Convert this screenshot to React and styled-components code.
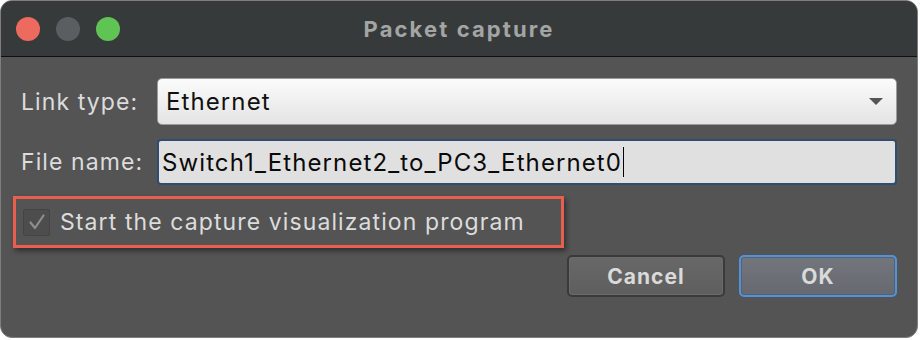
import React from "react";
import styled, { createGlobalStyle } from "styled-components";

const Global = createGlobalStyle`
  html, body { margin: 0; padding: 0; background: #ffffff; }
  body { font-family: Inter, "Noto Sans", sans-serif; }
`;

const Window = styled.div`
  box-sizing: border-box;
  width: 918px;
  height: 338px;
  border: 1px solid #7e7e7e;
  border-radius: 12px;
  overflow: hidden;
  background: #545454;
  display: flex;
  flex-direction: column;
`;

const TitleBar = styled.div`
  position: relative;
  height: 55px;
  flex: none;
  background: #363a3a;
  border-bottom: 1px solid #101010;
  display: flex;
  align-items: center;
  padding-left: 15px;
  gap: 16px;
`;

const Light = styled.span`
  width: 24px;
  height: 24px;
  border-radius: 50%;
  background: ${(p) => p.$color};
`;

const Title = styled.div`
  position: absolute;
  left: 0;
  right: 0;
  top: 0;
  bottom: 0;
  display: flex;
  align-items: center;
  justify-content: center;
  font-weight: 700;
  font-size: 22px;
  letter-spacing: 2.1px;
  color: #a3a5a5;
  pointer-events: none;
`;

const Content = styled.div`
  flex: 1;
  padding: 21px 20px 0 12px;
  display: flex;
  flex-direction: column;
`;

const Form = styled.div`
  display: grid;
  grid-template-columns: 136px 1fr;
  row-gap: 14px;
  align-items: center;
  padding-left: 8px;
`;

const Label = styled.div`
  font-size: 23px;
  letter-spacing: 1.1px;
  color: #dcdcdc;
`;

const Combo = styled.div`
  box-sizing: border-box;
  height: 47px;
  border: 1px solid #9c9c9c;
  border-radius: 5px;
  background: linear-gradient(#fbfbfb, #e4e4e4);
  display: flex;
  align-items: center;
  justify-content: space-between;
  padding: 0 13px 0 8px;
  font-size: 24px;
  letter-spacing: 1.1px;
  color: #111;
`;

const Arrow = styled.span`
  width: 0;
  height: 0;
  border-left: 7px solid transparent;
  border-right: 7px solid transparent;
  border-top: 7px solid #555;
`;

const Input = styled.div`
  box-sizing: border-box;
  height: 46px;
  border: 2px solid #2e4d70;
  border-radius: 4px;
  background: #e0e0e0;
  display: flex;
  align-items: center;
  padding-left: 3px;
  font-size: 24px;
  letter-spacing: 1.1px;
  color: #0a0a0a;
`;

const Caret = styled.span`
  display: inline-block;
  width: 1px;
  height: 30px;
  background: #000;
  margin-left: 1px;
`;

const Highlight = styled.div`
  box-sizing: border-box;
  margin-top: 11px;
  width: 551px;
  height: 52px;
  border: 3px solid #e6604d;
  box-shadow: 2px 3px 5px rgba(0, 0, 0, 0.45);
  display: flex;
  align-items: center;
  padding-left: 7px;
  gap: 10px;
`;

const Check = styled.span`
  box-sizing: border-box;
  width: 27px;
  height: 27px;
  border: 1px solid #444;
  background: #4d4d4d;
  border-radius: 2px;
  display: flex;
  align-items: center;
  justify-content: center;
`;

const CheckLabel = styled.span`
  font-size: 23px;
  letter-spacing: 1.1px;
  color: #dcdcdc;
`;

const Buttons = styled.div`
  display: flex;
  justify-content: flex-end;
  gap: 14px;
  margin-top: 7px;
`;

const Button = styled.div`
  box-sizing: border-box;
  width: 158px;
  height: 42px;
  border-radius: 5px;
  display: flex;
  align-items: center;
  justify-content: center;
  font-weight: 700;
  font-size: 21px;
  letter-spacing: 1px;
  color: #dadada;
  border: 2px solid ${(p) => (p.$primary ? "#4f93dc" : "#3a3a3a")};
  background: ${(p) =>
    p.$primary ? "linear-gradient(#73767c, #666a70)" : "linear-gradient(#686868, #5e5e5e)"};
  box-shadow: inset 0 0 0 1px ${(p) => (p.$primary ? "#5d6066" : "#6a6a6a")};
`;

export default function App() {
  return (
    <>
      <Global />
      <Window>
        <TitleBar>
          <Light $color="#ed6a5e" />
          <Light $color="#5b5e60" />
          <Light $color="#5fc454" />
          <Title>Packet capture</Title>
        </TitleBar>
        <Content>
          <Form>
            <Label>Link type:</Label>
            <Combo>
              <span>Ethernet</span>
              <Arrow />
            </Combo>
            <Label>File name:</Label>
            <Input>
              Switch1_Ethernet2_to_PC3_Ethernet0
              <Caret />
            </Input>
          </Form>
          <Highlight>
            <Check>
              <svg width="18" height="18" viewBox="0 0 18 18">
                <path d="M2.5 9.5 L7 15 L15.5 2.5" fill="none" stroke="#8e8e8e" strokeWidth="2.2" strokeLinecap="round" strokeLinejoin="round" />
              </svg>
            </Check>
            <CheckLabel>Start the capture visualization program</CheckLabel>
          </Highlight>
          <Buttons>
            <Button>Cancel</Button>
            <Button $primary>OK</Button>
          </Buttons>
        </Content>
      </Window>
    </>
  );
}
